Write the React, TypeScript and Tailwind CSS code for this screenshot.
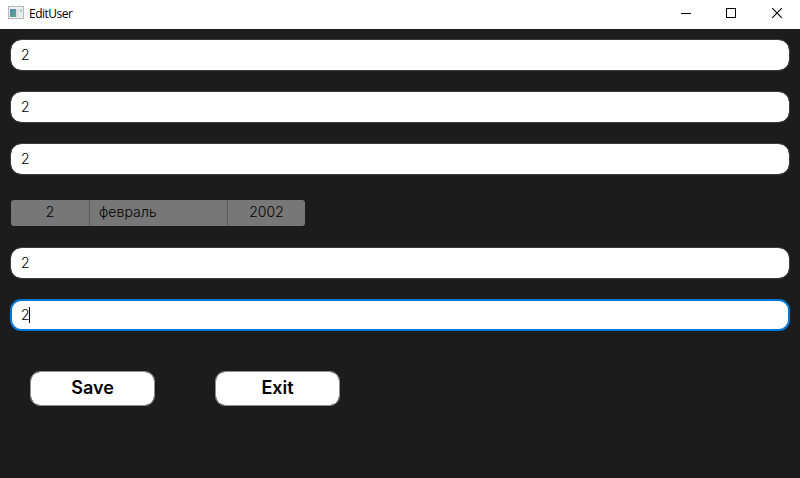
function Field({ value, focused = false }: { value: string; focused?: boolean }) {
  return (
    <div
      className={
        focused
          ? "flex h-8 items-center rounded-[11px] border-2 border-[#0078d7] bg-white pl-[9px] pb-px text-[14px] font-light text-black"
          : "flex h-8 items-center rounded-[11px] border border-[#3c3c3c] bg-white bg-clip-padding pl-[10px] pb-px text-[14px] font-light text-black"
      }
    >
      {value}
      {focused && <span className="-ml-px h-4 w-px bg-black" />}
    </div>
  );
}

function ActionButton({ label }: { label: string }) {
  return (
    <button className="flex h-[35px] w-[125px] items-center justify-center rounded-[10px] border border-[#8e8e8e] bg-white bg-clip-padding pb-[2px] text-[18px] font-semibold text-black">
      {label}
    </button>
  );
}

function WindowIcon() {
  return (
    <svg width="16" height="14" viewBox="0 0 16 14" className="-mt-px" shapeRendering="crispEdges">
      <defs>
        <linearGradient id="pane" x1="0" y1="0" x2="1" y2="1">
          <stop offset="0" stopColor="#4d87b8" />
          <stop offset="1" stopColor="#5aac83" />
        </linearGradient>
      </defs>
      <rect x="0.5" y="0.5" width="15" height="12" fill="#f1f2f3" stroke="#b4b7ba" />
      <rect x="2" y="3" width="6" height="8" fill="url(#pane)" />
      <rect x="8" y="3" width="3" height="8" fill="#dedfe2" />
      <rect x="12" y="3" width="2" height="3" fill="#a6cdc8" />
      <rect x="12" y="6" width="2" height="5" fill="#e7edeb" />
    </svg>
  );
}

export default function App() {
  return (
    <div className="flex h-[478px] w-[800px] flex-col overflow-hidden bg-[#1c1c1c] font-['Inter',sans-serif]">
      <header className="flex h-[29px] shrink-0 items-center bg-white pb-[2px] pl-2">
        <WindowIcon />
        <span className="ml-[5px] flex-1 font-['Open_Sans',sans-serif] text-[12px] leading-4 tracking-[-0.5px] text-black">
          EditUser
        </span>
        <svg width="130" height="27" viewBox="0 0 130 27" fill="none" stroke="#000" className="shrink-0">
          <path d="M11 13.5h10M56.5 8.5h9v9h-9z" shapeRendering="crispEdges" />
          <path d="M102.2 8.2l9.6 9.6M111.8 8.2l-9.6 9.6" strokeWidth="1.1" />
        </svg>
      </header>
      <main className="flex flex-col px-[10px] pt-[10px]">
        <div className="flex flex-col gap-5">
          <Field value="2" />
          <Field value="2" />
          <Field value="2" />
          <div className="flex h-8 items-end px-px pb-px">
            <div className="flex h-[26px] w-[294px] rounded-[3px] bg-[#777777] text-[14px] leading-[23px] font-light text-black">
              <span className="w-[79px] border-r border-[#5d5d5d] text-center">2</span>
              <span className="w-[138px] border-r border-[#5d5d5d] pl-[9px] tracking-[0.1px]">февраль</span>
              <span className="flex-1 text-center">2002</span>
            </div>
          </div>
          <Field value="2" />
          <Field value="2" focused />
        </div>
        <div className="mt-10 flex gap-[60px] pl-5">
          <ActionButton label="Save" />
          <ActionButton label="Exit" />
        </div>
      </main>
    </div>
  );
}
